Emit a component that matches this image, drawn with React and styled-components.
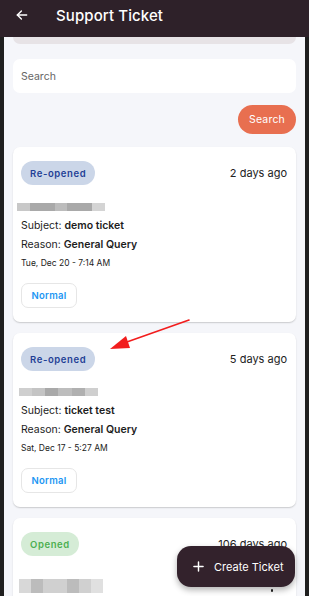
import React from "react";
import styled, { createGlobalStyle } from "styled-components";

const Global = createGlobalStyle`
  html, body { margin: 0; padding: 0; background: #1f1f1f; }
  body { font-family: "Inter", "Roboto", sans-serif; }
  #root { width: 309px; height: 596px; overflow: hidden; position: relative; }
  * { box-sizing: border-box; }
`;

const Screen = styled.div`
  width: 309px;
  height: 596px;
  display: flex;
  flex-direction: column;
  background: #1f1f1f;
  position: relative;
  overflow: hidden;
`;

const AppBar = styled.header`
  height: 37px;
  flex: none;
  background: #2e2129;
  display: flex;
  align-items: flex-start;
  padding: 8px 0 0 15px;
  gap: 27px;
  color: #fff;
`;

const Title = styled.h1`
  margin: 0;
  font-size: 15px;
  font-weight: 500;
  line-height: 16px;
  letter-spacing: 0.1px;
`;

const Content = styled.main`
  flex: 1;
  margin: 0 4px;
  background: #f5f6fa;
  padding: 0 9px;
  display: flex;
  flex-direction: column;
`;

const ScrolledBar = styled.div`
  height: 7px;
  background: #e7e3e6;
  border-radius: 0 0 9px 9px;
`;

const SearchInput = styled.input`
  margin-top: 15px;
  height: 34px;
  border: none;
  border-radius: 7px;
  background: #fff;
  padding: 0 8px;
  font-family: inherit;
  font-size: 10.5px;
  color: #333;
  outline: none;
  &::placeholder { color: #666; }
`;

const SearchRow = styled.div`
  display: flex;
  justify-content: flex-end;
  margin-top: 12px;
`;

const SearchButton = styled.button`
  width: 58px;
  height: 29px;
  border: none;
  border-radius: 15px;
  background: #e86f50;
  color: #fff;
  font-family: inherit;
  font-size: 10.5px;
  letter-spacing: 0.2px;
`;

const List = styled.div`
  display: flex;
  flex-direction: column;
  gap: 11px;
  margin-top: 13px;
`;

const Card = styled.section`
  background: #fff;
  border-radius: 7px;
  box-shadow: 0 1px 1.5px rgba(0, 0, 0, 0.18);
  padding: 14px 9px 14px 8px;
  display: flex;
  flex-direction: column;
`;

const TopRow = styled.div`
  display: flex;
  align-items: center;
  justify-content: space-between;
`;

const Badge = styled.span`
  height: 24px;
  padding: 0 9px;
  border-radius: 12px;
  display: inline-flex;
  align-items: center;
  font-size: 9.5px;
  font-weight: 600;
  letter-spacing: 0.6px;
  background: ${(p) => (p.$tone === "green" ? "#d5ecd6" : "#cbd6e8")};
  color: ${(p) => (p.$tone === "green" ? "#4caf50" : "#1f3f96")};
`;

const Ago = styled.span`
  font-size: 11px;
  color: #222;
`;

const Blur = styled.div`
  display: flex;
  margin: ${(p) => p.$m || "18px 0 0 -4px"};
  height: ${(p) => p.$h || 8}px;
`;

const Px = styled.span`
  display: block;
  height: 100%;
  width: ${(p) => p.$w}px;
  background: ${(p) => p.$c};
`;

const Line = styled.p`
  margin: ${(p) => p.$mt || 8}px 0 0;
  font-size: 10.5px;
  line-height: 11px;
  color: #1d1d1d;
  b { font-weight: 600; }
`;

const DateText = styled.p`
  margin: 8px 0 0;
  font-size: 8.5px;
  line-height: 10px;
  color: #222;
`;

const PriorityButton = styled.button`
  margin-top: 15px;
  align-self: flex-start;
  width: 56px;
  height: 25px;
  border: 1px solid #e6e6e6;
  border-radius: 7px;
  background: #fff;
  color: #2196f3;
  font-family: inherit;
  font-size: 9.5px;
  font-weight: 600;
  letter-spacing: 0.3px;
`;

const BottomRow = styled.div`
  display: flex;
  align-items: center;
  justify-content: space-between;
  margin-top: 23px;
`;

const Kebab = styled.div`
  display: flex;
  flex-direction: column;
  gap: 2px;
  margin-right: 14px;
  span { width: 2.5px; height: 2.5px; border-radius: 50%; background: #222; }
`;

const Fab = styled.button`
  position: absolute;
  left: 177px;
  top: 546px;
  width: 118px;
  height: 41px;
  border: none;
  border-radius: 14px;
  background: #33222c;
  color: #fff;
  display: flex;
  align-items: center;
  gap: 10px;
  padding: 0 0 0 16px;
  font-family: inherit;
  font-size: 11px;
  box-shadow: 0 3px 6px rgba(0, 0, 0, 0.3);
`;

const Arrow = styled.svg`
  position: absolute;
  left: 0;
  top: 0;
  pointer-events: none;
`;

const blurs = {
  a: [[13, "#c8c8c8"], [25, "#a9a9a9"], [12, "#bcbcbc"], [25, "#a9a9a9"], [13, "#d4d4d4"]],
  b: [[13, "#cfcfcf"], [13, "#c4c4c4"], [13, "#a9a9a9"], [14, "#bdbdbd"], [13, "#b0b0b0"], [13, "#cfcfcf"]],
  c: [[12, "#d8d8d8"], [12, "#bcbcbc"], [12, "#d0d0d0"], [12, "#d0d0d0"], [12, "#bcbcbc"], [12, "#d0d0d0"], [12, "#e0e0e0"]],
};

function BlurRow({ k, h, m }) {
  return (
    <Blur $h={h} $m={m}>
      {blurs[k].map(([w, c], i) => (
        <Px key={i} $w={w} $c={c} />
      ))}
    </Blur>
  );
}

function Ticket({ ago, blur, subject, date, blurMargin }) {
  return (
    <Card>
      <TopRow>
        <Badge>Re-opened</Badge>
        <Ago>{ago}</Ago>
      </TopRow>
      <BlurRow k={blur} m={blurMargin} />
      <Line $mt={9}>
        Subject: <b>{subject}</b>
      </Line>
      <Line>
        Reason: <b>General Query</b>
      </Line>
      <DateText>{date}</DateText>
      <PriorityButton>Normal</PriorityButton>
    </Card>
  );
}

export default function App() {
  return (
    <Screen>
      <Global />
      <AppBar>
        <svg width="14" height="14" viewBox="0 0 24 24" fill="none" stroke="#fff" strokeWidth="2.4" strokeLinecap="round" strokeLinejoin="round">
          <path d="M20 12H4" />
          <path d="M11 5l-7 7 7 7" />
        </svg>
        <Title>Support Ticket</Title>
      </AppBar>
      <Content>
        <ScrolledBar />
        <SearchInput placeholder="Search" />
        <SearchRow>
          <SearchButton>Search</SearchButton>
        </SearchRow>
        <List>
          <Ticket ago="2 days ago" blur="a" subject="demo ticket" date="Tue, Dec 20 - 7:14 AM" blurMargin="18px 0 0 -4px" />
          <Ticket ago="5 days ago" blur="b" subject="ticket test" date="Sat, Dec 17 - 5:27 AM" blurMargin="17px 0 0 -2px" />
          <Card>
            <TopRow>
              <Badge $tone="green">Opened</Badge>
              <Ago>106 days ago</Ago>
            </TopRow>
            <BottomRow>
              <BlurRow k="c" h={14} m="0 0 0 -2px" />
              <Kebab>
                <span />
                <span />
                <span />
              </Kebab>
            </BottomRow>
          </Card>
        </List>
      </Content>
      <Fab>
        <svg width="11" height="11" viewBox="0 0 12 12" stroke="#fff" strokeWidth="1.6" strokeLinecap="round">
          <path d="M6 1v10M1 6h10" />
        </svg>
        Create Ticket
      </Fab>
      <Arrow width="309" height="596" viewBox="0 0 309 596">
        <line x1="189" y1="320" x2="124" y2="343" stroke="#f21d1d" strokeWidth="1.6" strokeLinecap="round" />
        <polygon points="110,349 126,336 130,348" fill="#f21d1d" />
      </Arrow>
    </Screen>
  );
}
